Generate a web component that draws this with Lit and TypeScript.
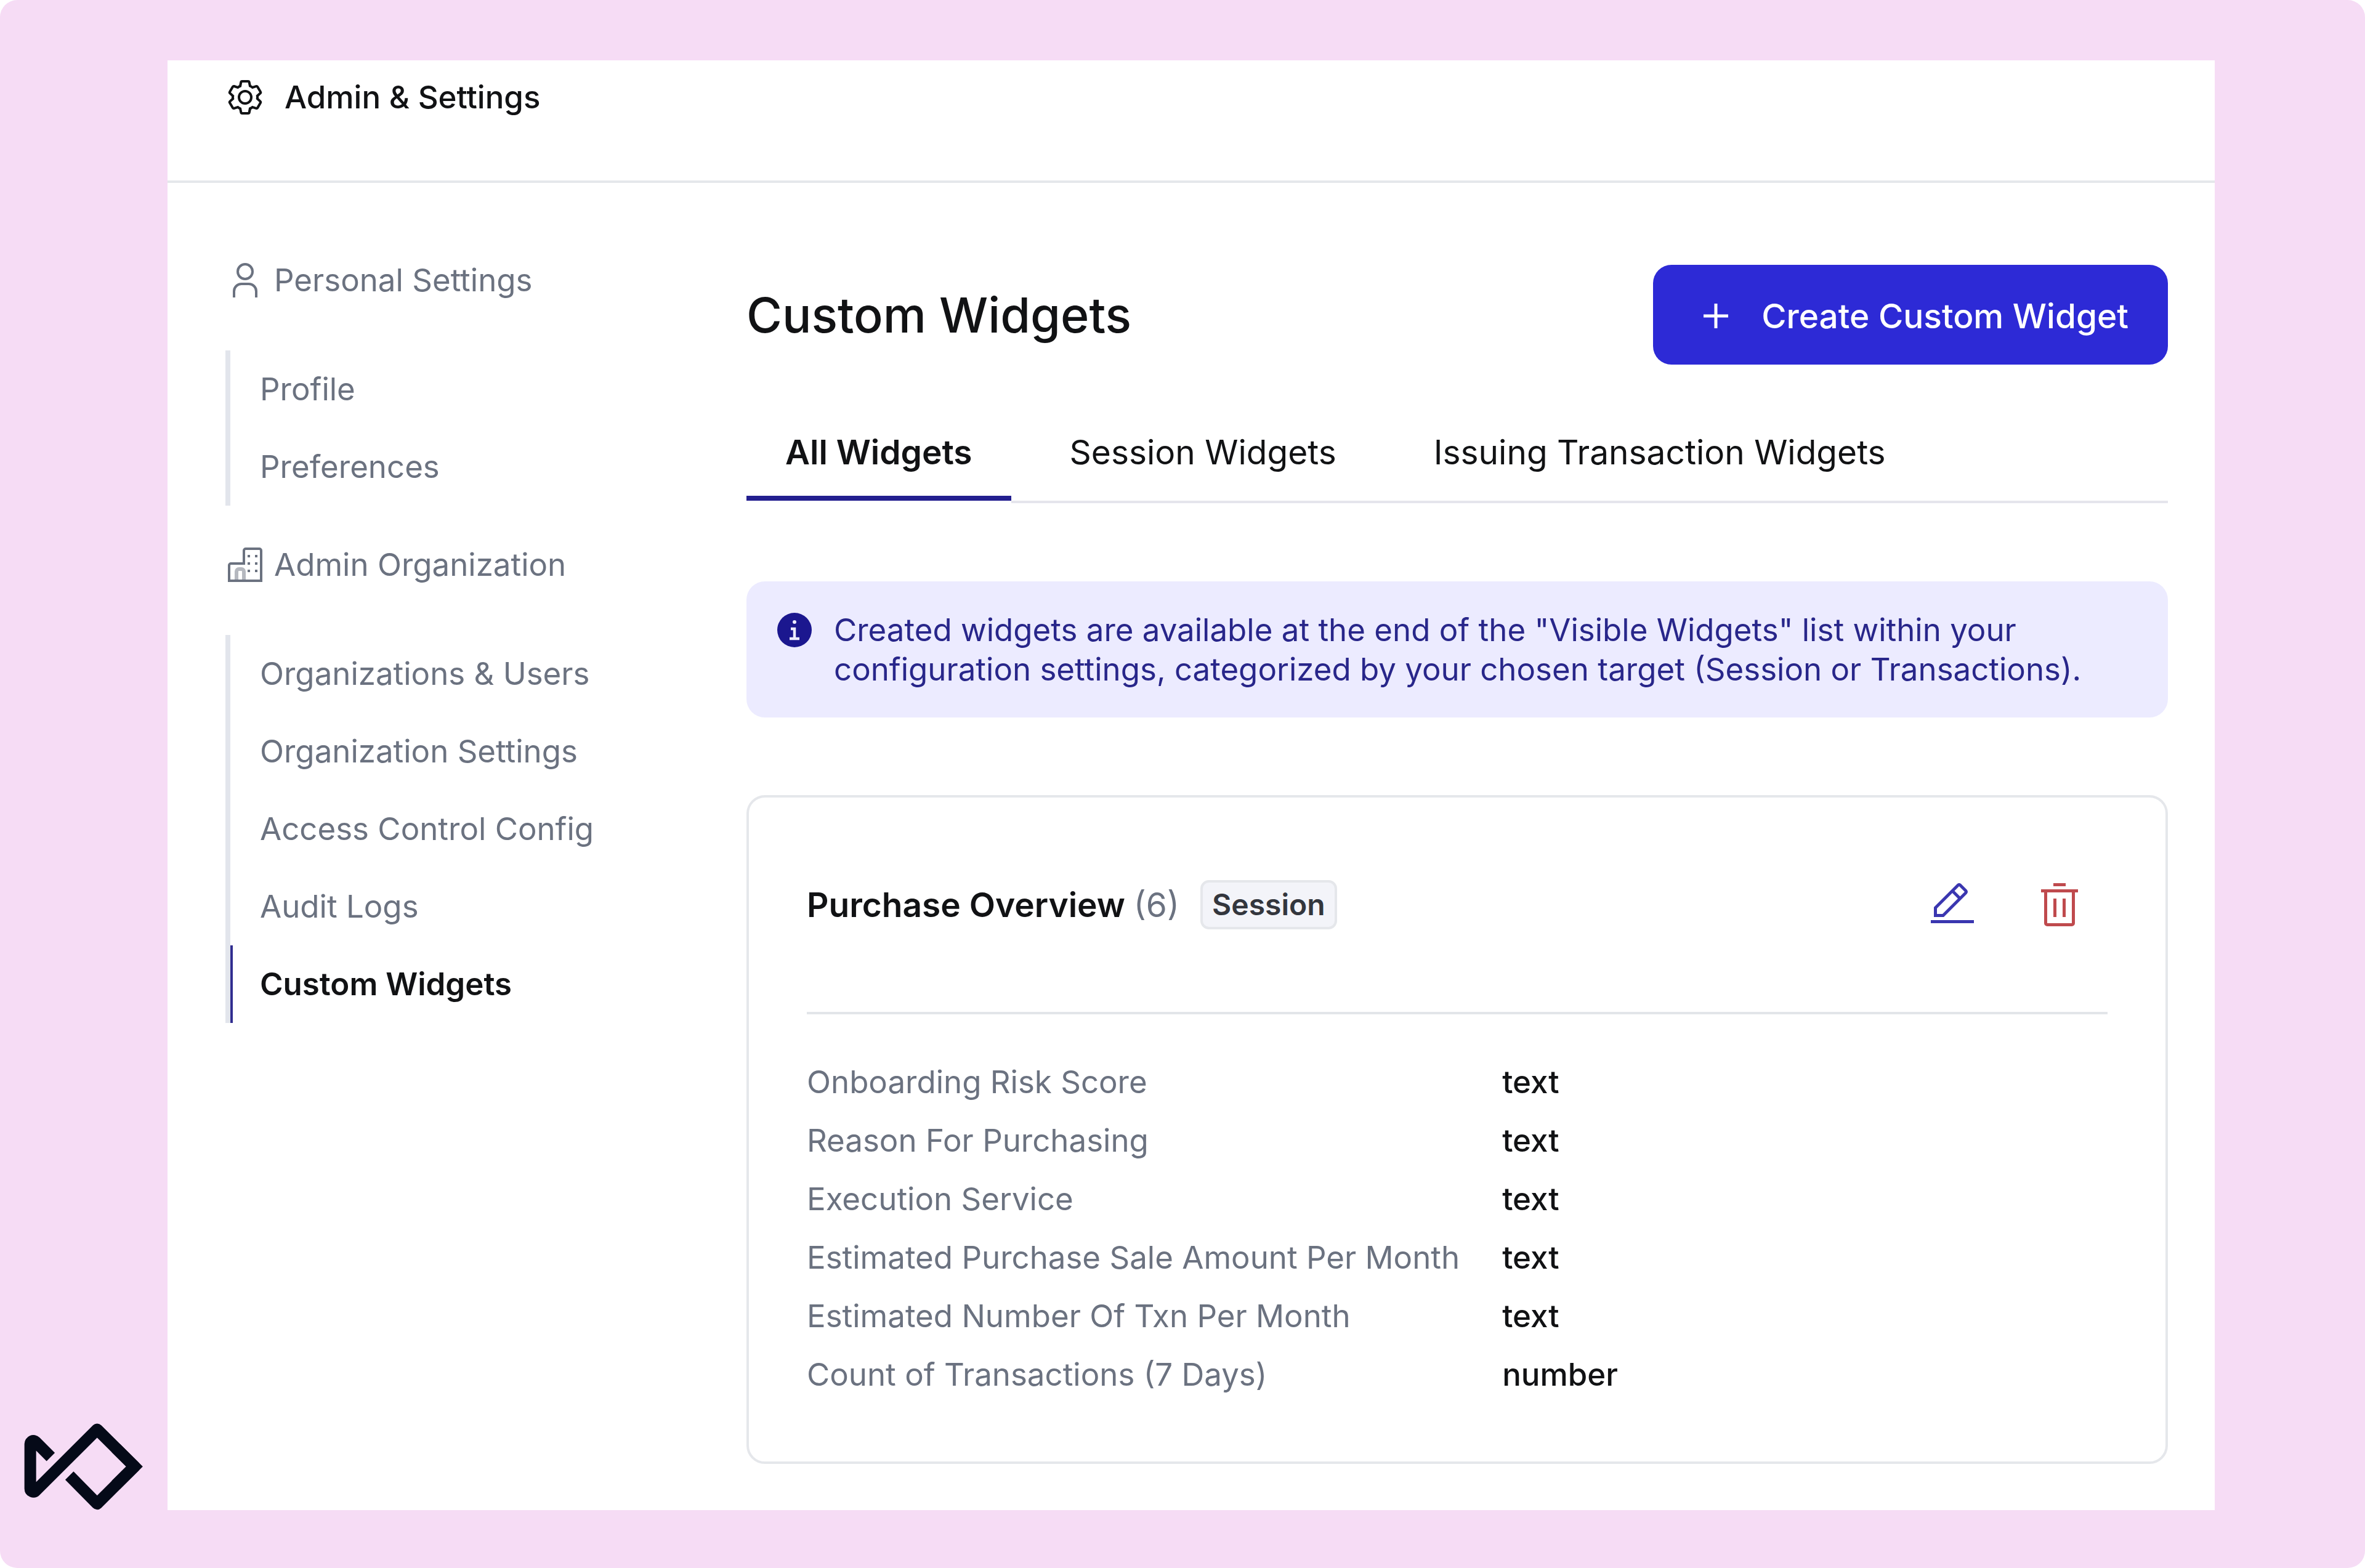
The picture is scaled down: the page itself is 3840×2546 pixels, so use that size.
import { LitElement, html, css, svg, nothing } from "lit";
import { customElement, state } from "lit/decorators.js";
import { classMap } from "lit/directives/class-map.js";

const gearIcon = svg`<path d="M27,16.76c0-.25,0-.5,0-.76s0-.51,0-.77l1.92-1.68A2,2,0,0,0,29.3,11L26.94,7a2,2,0,0,0-1.73-1,2,2,0,0,0-.64.1l-2.43.82a11.35,11.35,0,0,0-1.31-.75l-.51-2.52a2,2,0,0,0-2-1.61H13.64a2,2,0,0,0-2,1.61l-.51,2.52a11.48,11.48,0,0,0-1.32.75L7.43,6.06A2,2,0,0,0,6.79,6,2,2,0,0,0,5.06,7L2.7,11a2,2,0,0,0,.41,2.51L5,15.24c0,.25,0,.5,0,.76s0,.51,0,.77L3.11,18.45A2,2,0,0,0,2.7,21L5.06,25a2,2,0,0,0,1.73,1,2,2,0,0,0,.64-.1l2.43-.82a11.35,11.35,0,0,0,1.31.75l.51,2.52a2,2,0,0,0,2,1.61h4.72a2,2,0,0,0,2-1.61l.51-2.52a11.48,11.48,0,0,0,1.32-.75l2.42.82a2,2,0,0,0,.64.1,2,2,0,0,0,1.73-1L29.3,21a2,2,0,0,0-.41-2.51ZM25.21,24l-3.43-1.16a8.86,8.86,0,0,1-2.71,1.57L18.36,28H13.64l-.71-3.55a9.36,9.36,0,0,1-2.7-1.57L6.79,24,4.43,20l2.72-2.4a8.9,8.9,0,0,1,0-3.13L4.43,12,6.79,8l3.43,1.16a8.86,8.86,0,0,1,2.71-1.57L13.64,4h4.72l.71,3.55a9.36,9.36,0,0,1,2.7,1.57L25.21,8,27.57,12l-2.72,2.4a8.9,8.9,0,0,1,0,3.13L27.57,20Z"/><path d="M16,22a6,6,0,1,1,6-6A5.94,5.94,0,0,1,16,22Zm0-10a3.91,3.91,0,0,0-4,4,3.91,3.91,0,0,0,4,4,3.91,3.91,0,0,0,4-4A3.91,3.91,0,0,0,16,12Z"/>`;

const userIcon = svg`<path d="M16,4a5,5,0,1,1-5,5,5,5,0,0,1,5-5m0-2a7,7,0,1,0,7,7A7,7,0,0,0,16,2Z"/><path d="M26,30H24V25a5,5,0,0,0-5-5H13a5,5,0,0,0-5,5v5H6V25a7,7,0,0,1,7-7h6a7,7,0,0,1,7,7Z"/>`;

const buildingIcon = svg`<path fill="none" stroke="currentColor" stroke-width="2" d="M3 29V16.500a1.500 1.500 0 0 1 1.500-1.500H15V4.500A1.500 1.500 0 0 1 16.500 3H27.500A1.500 1.500 0 0 1 29 4.500V29Z"/><path fill="none" stroke="currentColor" stroke-width="3" opacity="0.5" d="M9 28V21.500a2 2 0 0 1 2-2h2a2 2 0 0 1 2 2v6.500"/><path d="M18 8h2v2h-2zM24 8h2v2h-2zM18 14h2v2h-2zM24 14h2v2h-2zM18 20h2v2h-2zM24 20h2v2h-2z"/>`;

const addIcon = svg`<path d="M17 15V8h-2v7H8v2h7v7h2v-7h7v-2z"/>`;

const infoIcon = svg`<path d="M16,2A14,14,0,1,0,30,16,14,14,0,0,0,16,2Zm0,6a1.500,1.500,0,1,1-1.500,1.500A1.500,1.500,0,0,1,16,8Zm4,16.125H12v-2.250h2.875v-5.750H13v-2.250h4.125v8H20Z"/>`;

const editIcon = svg`<path d="M2 26H30V28H2z"/><path d="M25.400,9c0.800-0.800,0.800-2,0-2.800l-3.600-3.600c-0.800-0.800-2-0.800-2.800,0l-15,15V24h6.400L25.400,9z M20.400,4L24,7.600l-3,3L17.400,7L20.400,4z M6,22v-3.600l10-10l3.600,3.600l-10,10H6z"/>`;

const trashIcon = svg`<path d="M12 12H14V24H12zM18 12H20V24H18z"/><path d="M4 6V8H6V28a2 2 0 0 0 2 2H24a2 2 0 0 0 2-2V8h2V6zM8 28V8H24V28zM12 2H20V4H12z"/>`;

const icon = (shape: unknown, cls = "icon") =>
  html`<svg class=${cls} viewBox="0 0 32 32" fill="currentColor" aria-hidden="true">${shape}</svg>`;

const sections = [
  { title: "Personal Settings", icon: userIcon, items: ["Profile", "Preferences"] },
  {
    title: "Admin Organization",
    icon: buildingIcon,
    items: [
      "Organizations & Users",
      "Organization Settings",
      "Access Control Config",
      "Audit Logs",
      "Custom Widgets",
    ],
  },
];

const tabs = ["All Widgets", "Session Widgets", "Issuing Transaction Widgets"];

const fields = [
  ["Onboarding Risk Score", "text"],
  ["Reason For Purchasing", "text"],
  ["Execution Service", "text"],
  ["Estimated Purchase Sale Amount Per Month", "text"],
  ["Estimated Number Of Txn Per Month", "text"],
  ["Count of Transactions (7 Days)", "number"],
];

@customElement("app-root")
export class AppRoot extends LitElement {
  static styles = css`
    :host {
      display: block;
      background: #fff;
      color: #111214;
      font-family: Inter, "Liberation Sans", sans-serif;
      font-size: 51px;
      line-height: 64px;
    }
    *,
    *::before,
    *::after {
      box-sizing: border-box;
    }
    h1,
    h2,
    h3,
    p,
    ul {
      margin: 0;
      padding: 0;
      font-weight: inherit;
      font-size: inherit;
    }
    ul {
      list-style: none;
    }
    button {
      margin: 0;
      border: 0;
      background: none;
      color: inherit;
      font: inherit;
      cursor: pointer;
    }
    a {
      color: inherit;
      text-decoration: none;
    }
    svg {
      display: block;
      flex: none;
    }
    .page {
      display: grid;
      grid-template-columns: 272px minmax(0, 1fr) 244px;
      min-height: 100vh;
      padding: 98px 0 94px;
      border-radius: 28px;
      background: #f6dcf5;
    }
    .brand {
      align-self: end;
      padding-left: 38px;
    }
    .logo {
      width: 196px;
      height: 142px;
    }
    .icon {
      width: 64px;
      height: 64px;
    }
    .icon-lg {
      width: 80px;
      height: 80px;
    }
    .panel {
      background: #fff;
    }
    .topbar {
      display: flex;
      align-items: center;
      gap: 32px;
      padding: 28px 94px 103px;
      border-bottom: 4px solid #e5e7eb;
      font-weight: 500;
    }
    .body {
      display: grid;
      grid-template-columns: 846px minmax(0, 1fr);
      padding: 0 76px 75px 94px;
    }
    .sidebar {
      display: flex;
      flex-direction: column;
      gap: 64px;
      padding-top: 126px;
      color: #6b7280;
    }
    .section-title {
      display: flex;
      align-items: center;
      gap: 15px;
    }
    .links {
      margin-top: 82px;
      border-left: 8px solid #e2e5ec;
    }
    .link {
      display: flex;
      align-items: center;
      height: 126px;
      padding-left: 44px;
      border-left: 4px solid transparent;
    }
    .link.current {
      border-left-color: #312e90;
      color: #111214;
      font-weight: 600;
    }
    .main {
      padding-top: 133px;
    }
    .heading {
      display: flex;
      align-items: center;
      justify-content: space-between;
    }
    .title {
      font-size: 79px;
      line-height: 96px;
      font-weight: 500;
    }
    .create {
      display: flex;
      align-items: center;
      gap: 34px;
      height: 162px;
      padding: 4px 64px 0 62px;
      border-radius: 30px;
      background: #2d2ad6;
      color: #fff;
      font-size: 55px;
      font-weight: 500;
    }
    .tabs {
      display: flex;
      gap: 32px;
      margin-top: 110px;
      border-bottom: 4px solid #e5e5ec;
      font-size: 55px;
    }
    .tab {
      padding: 0 63px 39px;
      border-bottom: 8px solid transparent;
    }
    .tab.selected {
      border-bottom-color: #231f8f;
      box-shadow: 0 4px 0 #fff;
      font-weight: 600;
    }
    .notice {
      display: flex;
      gap: 32px;
      margin-top: 127px;
      padding: 47px 46px 46px;
      border-radius: 30px;
      background: #ecebff;
      color: #28268a;
    }
    .notice .icon {
      color: #1b178f;
    }
    .card {
      margin-top: 126px;
      padding: 94px;
      border: 4px solid #e5e7eb;
      border-radius: 30px;
    }
    .card-head {
      display: flex;
      align-items: center;
      justify-content: space-between;
      padding-bottom: 94px;
      border-bottom: 4px solid #e2e5e9;
    }
    .card-title {
      display: flex;
      align-items: center;
      gap: 34px;
    }
    .name {
      font-size: 55px;
      font-weight: 600;
    }
    .count {
      color: #6b7280;
      font-weight: 400;
    }
    .badge {
      padding: 4px 15px;
      border: 4px solid #e5e7eb;
      border-radius: 14px;
      background: #f3f4f9;
      color: #33363d;
      font-size: 48px;
      font-weight: 600;
    }
    .actions {
      display: flex;
      gap: 18px;
    }
    .action {
      display: grid;
      place-items: center;
      width: 156px;
      height: 160px;
      padding: 0;
      color: #3a36b0;
    }
    .action.danger {
      color: #bf4a4d;
    }
    .fields {
      margin-top: 62px;
      border-collapse: collapse;
    }
    .fields th,
    .fields td {
      height: 95px;
      padding: 0;
      text-align: left;
      font-weight: 400;
    }
    .fields th {
      padding-right: 69px;
      color: #6b7280;
    }
    .fields td {
      font-weight: 500;
    }
  `;

  @state() private activeTab = tabs[0];
  @state() private activeLink = "Custom Widgets";

  private renderSidebar() {
    return html`<nav class="sidebar" aria-label="Settings">
      ${sections.map(
        (section) => html`<section>
          <h2 class="section-title">${icon(section.icon)}${section.title}</h2>
          <ul class="links">
            ${section.items.map(
              (item) => html`<li>
                <a
                  class=${classMap({ link: true, current: item === this.activeLink })}
                  href="#"
                  aria-current=${item === this.activeLink ? "page" : nothing}
                  @click=${(event: Event) => {
                    event.preventDefault();
                    this.activeLink = item;
                  }}
                  >${item}</a
                >
              </li>`
            )}
          </ul>
        </section>`
      )}
    </nav>`;
  }

  private renderCard() {
    return html`<article class="card">
      <header class="card-head">
        <div class="card-title">
          <h2 class="name">Purchase Overview <span class="count">(6)</span></h2>
          <span class="badge">Session</span>
        </div>
        <div class="actions">
          <button class="action" type="button" aria-label="Edit">${icon(editIcon, "icon-lg")}</button>
          <button class="action danger" type="button" aria-label="Delete">
            ${icon(trashIcon, "icon-lg")}
          </button>
        </div>
      </header>
      <table class="fields">
        <tbody>
          ${fields.map(
            ([label, type]) => html`<tr>
              <th scope="row">${label}</th>
              <td>${type}</td>
            </tr>`
          )}
        </tbody>
      </table>
    </article>`;
  }

  render() {
    return html`<div class="page">
      <div class="brand">
        <svg
          class="logo"
          viewBox="114 214 588 426"
          fill="none"
          stroke="#050a18"
          stroke-width="57"
          aria-hidden="true"
        >
          <path
            stroke-linejoin="round"
            d="M247 381L173 307A15 15 0 0 0 147.500 318V535.500A15 15 0 0 0 173 546L473 247L655 428L473 609L338 472"
          />
          <path stroke-linejoin="miter" d="M564 338L655 428L564 518" />
        </svg>
      </div>
      <div class="panel">
        <header class="topbar">${icon(gearIcon)}<span>Admin &amp; Settings</span></header>
        <div class="body">
          ${this.renderSidebar()}
          <main class="main">
            <div class="heading">
              <h1 class="title">Custom Widgets</h1>
              <button class="create" type="button">
                ${icon(addIcon, "icon-lg")}Create Custom Widget
              </button>
            </div>
            <div class="tabs" role="tablist">
              ${tabs.map(
                (tab) => html`<button
                  class=${classMap({ tab: true, selected: tab === this.activeTab })}
                  type="button"
                  role="tab"
                  aria-selected=${tab === this.activeTab ? "true" : "false"}
                  @click=${() => (this.activeTab = tab)}
                >
                  ${tab}
                </button>`
              )}
            </div>
            <div class="notice" role="note">
              ${icon(infoIcon)}
              <p>
                Created widgets are available at the end of the "Visible Widgets" list within your
                configuration settings, categorized by your chosen target (Session or Transactions).
              </p>
            </div>
            ${this.renderCard()}
          </main>
        </div>
      </div>
    </div>`;
  }
}
